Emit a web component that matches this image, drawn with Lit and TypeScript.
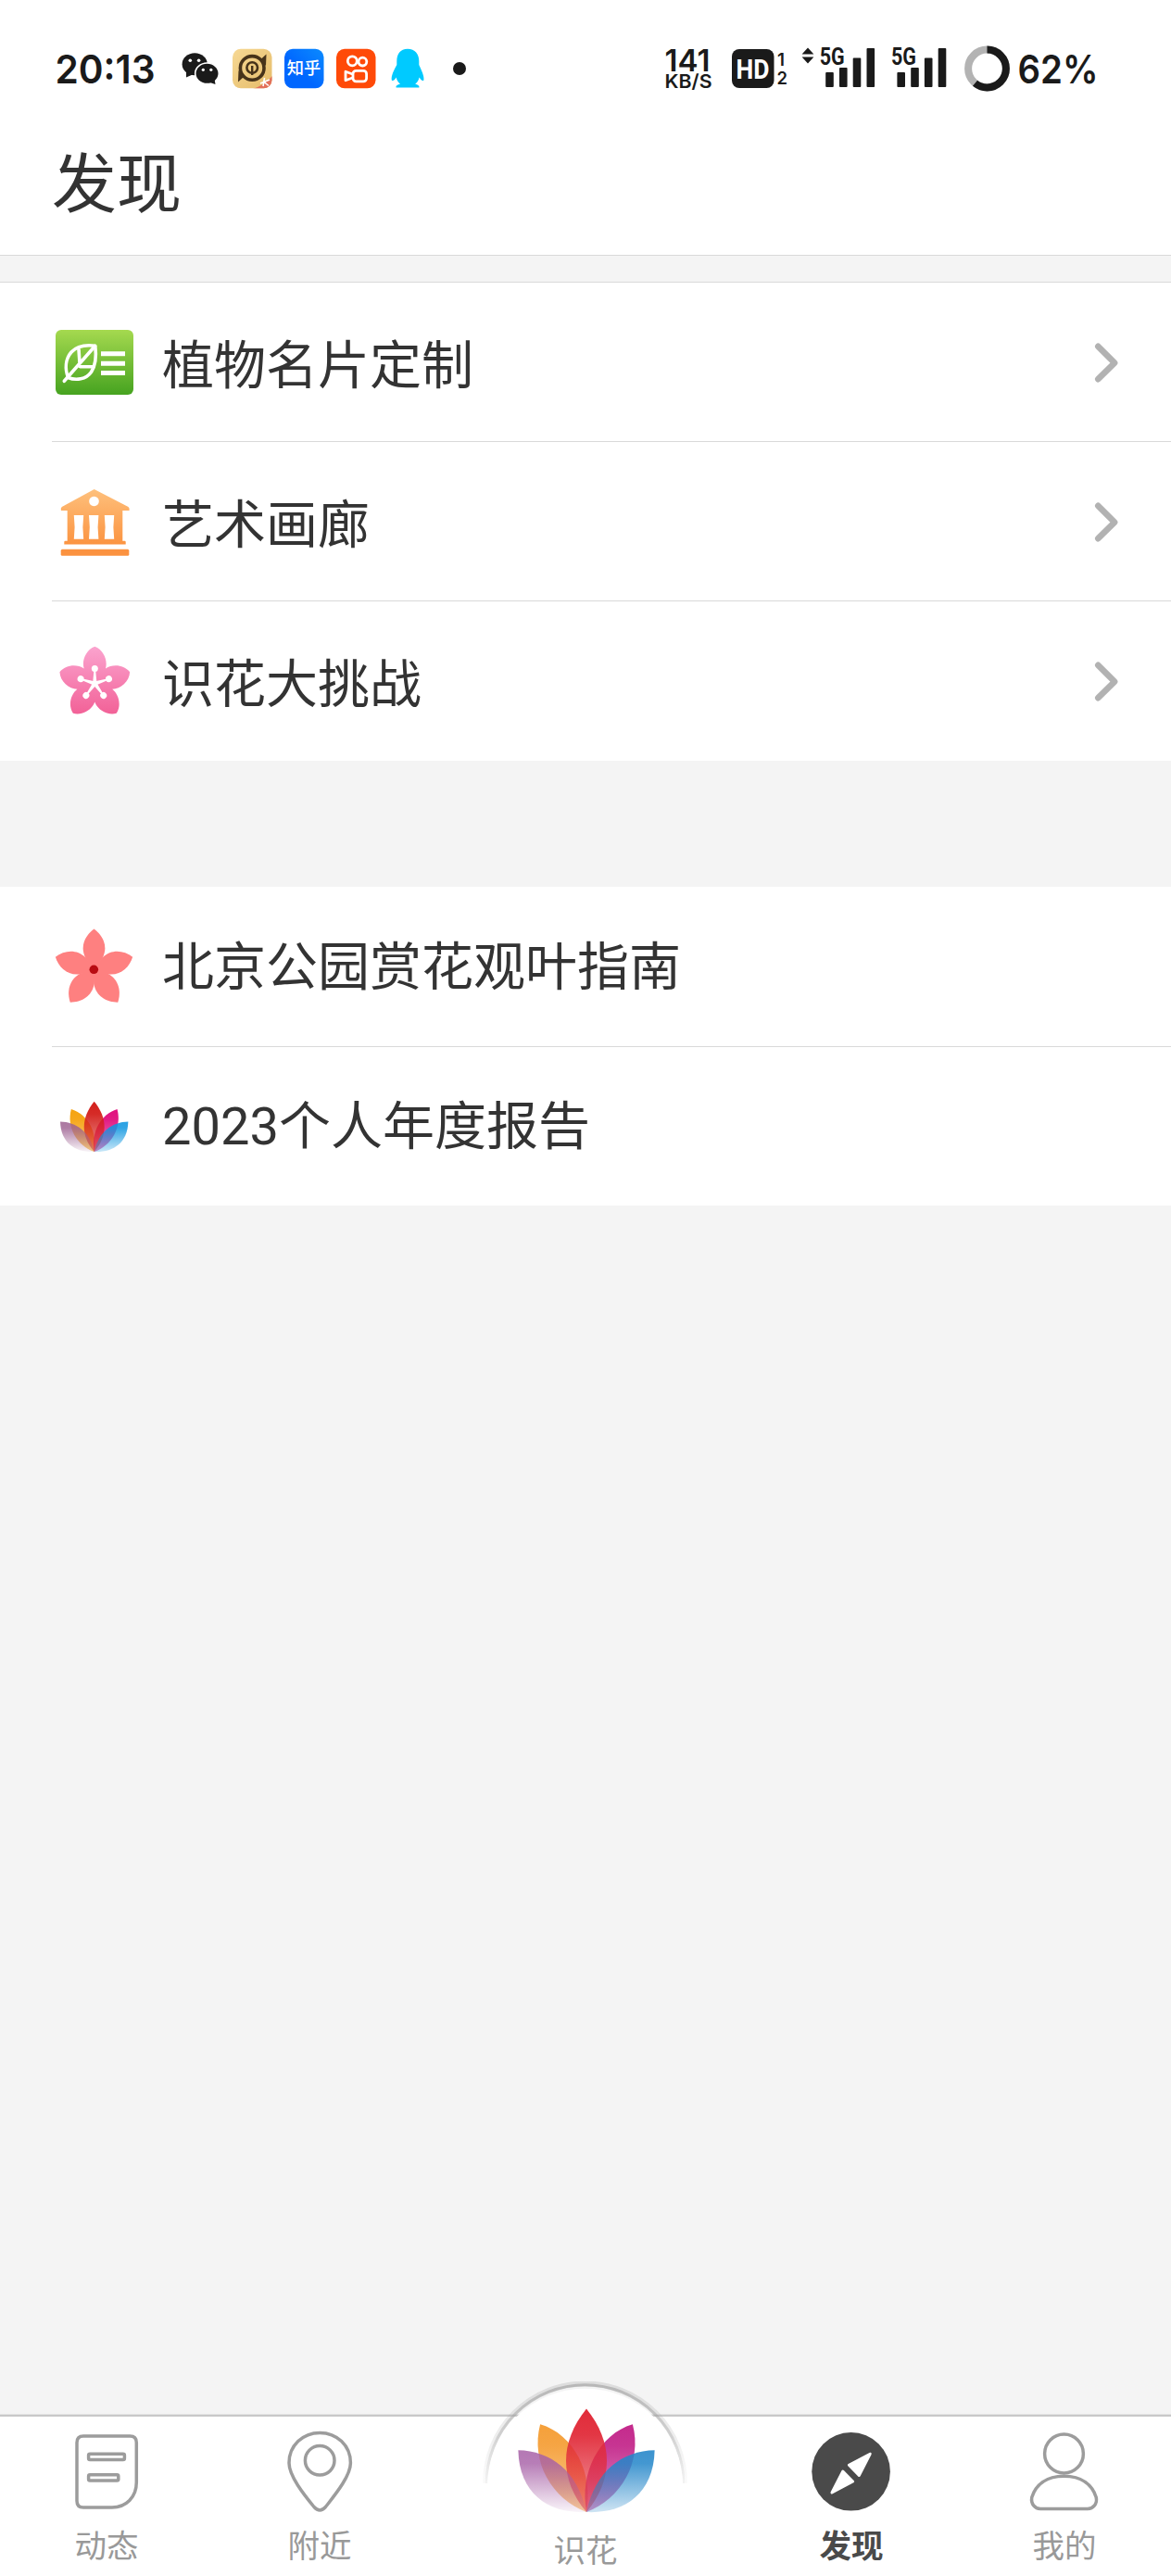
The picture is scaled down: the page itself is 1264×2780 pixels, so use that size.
import {LitElement, TemplateResult, css, html, svg} from 'lit';
import {customElement, property} from 'lit/decorators.js';
import {classMap} from 'lit/directives/class-map.js';

type Drawing = TemplateResult<2>;

interface ListItem {
  label: string;
  icon: Drawing;
  viewBox: string;
  arrow?: boolean;
}

interface Tab {
  label: string;
  icon: Drawing;
  viewBox: string;
  width: number;
  active?: boolean;
  center?: boolean;
}

// Five petals around the origin, one every 72 degrees.
const ANGLES = [0, 72, 144, 216, 288];

const lotus = (id: string, colors: string[], transform: string) => {
  const [purple, orange, red, magenta, blue] = colors;
  const fade = (name: string, color: string, top: number, end: number) => svg`
    <linearGradient id="${id}-${name}" gradientUnits="userSpaceOnUse" x1="0" y1=${top} x2="0" y2="0">
      <stop offset="0" stop-color=${color}></stop>
      <stop offset="0.25" stop-color=${color} stop-opacity="0.95"></stop>
      <stop offset="1" stop-color=${color} stop-opacity=${end}></stop>
    </linearGradient>`;
  const middle = 'M0 0 C-38 -14 -62 -54 -51 -94.7 C-14 -84 8 -42 0 0Z';
  const outer = 'M0 0 C-40 2 -74 -18 -75.3 -66.7 C-40 -66 -10 -45 0 0Z';
  return svg`
    <defs>
      ${fade('purple', purple, -70, 0.08)}
      ${fade('orange', orange, -95, 0.5)}
      ${fade('red', red, -111, 0.45)}
      ${fade('magenta', magenta, -95, 0.5)}
      ${fade('blue', blue, -70, 0.25)}
    </defs>
    <g transform=${transform}>
      <path d=${middle} fill="url(#${id}-orange)"></path>
      <path d=${middle} fill="url(#${id}-magenta)" transform="scale(-1 1)"></path>
      <path d="M0 0 C-30 -35 -30 -75 0 -111.5 C30 -75 30 -35 0 0Z" fill="url(#${id}-red)"></path>
      <path d=${outer} fill="url(#${id}-purple)" opacity="0.85"></path>
      <path d=${outer} fill="url(#${id}-blue)" opacity="0.9" transform="scale(-1 1)"></path>
    </g>`;
};

const cardIcon = svg`
  <defs>
    <linearGradient id="card" x1="0" y1="0" x2="0" y2="1">
      <stop offset="0" stop-color="#a5d94f"></stop>
      <stop offset="1" stop-color="#46a320"></stop>
    </linearGradient>
  </defs>
  <rect x="60" y="356" width="84" height="70" rx="6" fill="url(#card)"></rect>
  <g fill="none" stroke="#fff" stroke-width="3.6" stroke-linecap="round" stroke-linejoin="round">
    <path d="M102.8 373.2 C92 371.8 83 373.4 77 380 C70.5 387.5 70 398 73.5 407.5 C82 411 93 409.5 98.5 401.5 C104 393 104 383 102.8 373.2Z"></path>
    <path d="M69.3 411.3 L102.5 373.5 M85 377 L86 392 M86.5 395.8 H100.5"></path>
  </g>
  <path d="M109 381.7 H135 M109 392.2 H135 M109 402.6 H135" stroke="#fff" stroke-width="5"></path>`;

const galleryIcon = svg`
  <defs>
    <linearGradient id="gallery" gradientUnits="userSpaceOnUse" x1="0" y1="528" x2="0" y2="590">
      <stop offset="0" stop-color="#fec07c"></stop>
      <stop offset="1" stop-color="#fb923f"></stop>
    </linearGradient>
  </defs>
  <path
    fill="url(#gallery)"
    fill-rule="evenodd"
    d="M101.7 528 L138.5 547 Q140 548 139.6 551 H132.3 V583.7 H134.7 Q135.7 583.7 135.7 585 V587.5 H69.3 V585 Q69.3 583.7 70.3 583.7 H72.7 V551 H65.9 Q65.2 548 66.8 547Z
      M101.5 535.7 a5.3 5.3 0 1 0 0.01 0Z
      M79.8 556 H90.2 Q88.6 569 90.2 581.7 H79.8 Q81.4 569 79.8 556Z
      M96 556 H106.4 Q104.8 569 106.4 581.7 H96 Q97.6 569 96 556Z
      M112.8 556 H123.2 Q121.6 569 123.2 581.7 H112.8 Q114.4 569 112.8 556Z"
  ></path>
  <rect x="65.7" y="592.7" width="73.6" height="7" rx="1.5" fill="#fb9240"></rect>`;

const challengeIcon = svg`
  <defs>
    <linearGradient id="challenge" gradientUnits="userSpaceOnUse" x1="0" y1="698" x2="0" y2="771">
      <stop offset="0" stop-color="#fba3ce"></stop>
      <stop offset="1" stop-color="#f26197"></stop>
    </linearGradient>
    <clipPath id="petals">
      ${ANGLES.map(angle => svg`
        <path
          transform="translate(102.3 737.6) rotate(${angle})"
          d="M0 0 L-11.4 -15.2 C-14.5 -24 -10 -36 0 -39.8 C10 -36 14.5 -24 11.4 -15.2Z"
        ></path>`)}
    </clipPath>
  </defs>
  <rect x="60" y="690" width="84" height="90" fill="url(#challenge)" clip-path="url(#petals)"></rect>
  ${ANGLES.map(angle => svg`
    <g transform="translate(102.3 737.6) rotate(${angle})" fill="#fff">
      <path d="M-2.2 0 L-0.9 -14 H0.9 L2.2 0Z"></path>
      <circle cy="-16" r="3.5"></circle>
    </g>`)}`;

const blossomIcon = svg`
  ${ANGLES.map(angle => svg`
    <path
      transform="translate(101.5 1046.2) rotate(${angle})"
      fill="#fe8080"
      d="M0 2 L-9.3 -12.5 C-15.5 -25 -9.5 -37 0 -43.8 C9.5 -37 15.5 -25 9.3 -12.5Z"
    ></path>`)}
  <circle cx="101.3" cy="1046.3" r="4.8" fill="#b80c12"></circle>`;

const groups: ListItem[][] = [
  [
    {label: '植物名片定制', icon: cardIcon, viewBox: '56 305 92 171', arrow: true},
    {label: '艺术画廊', icon: galleryIcon, viewBox: '56 477 92 171', arrow: true},
    {label: '识花大挑战', icon: challengeIcon, viewBox: '56 649 92 171', arrow: true},
  ],
  [
    {label: '北京公园赏花观叶指南', icon: blossomIcon, viewBox: '56 958 92 171'},
    {
      label: '2023个人年度报告',
      icon: lotus(
        'report',
        ['#9c5f90', '#f5a310', '#d3201c', '#e0107e', '#0f96e0'],
        'translate(101.7 1243) scale(0.487)'
      ),
      viewBox: '56 1130 92 171',
    },
  ],
];

const tabs: Tab[] = [
  {
    label: '动态',
    width: 90,
    viewBox: '70 2610 90 113',
    icon: svg`
      <path d="M90 2629 H140.3 Q147.3 2629 147.3 2636 V2679 C147.3 2695 136 2706 121 2706 H90 Q83 2706 83 2699 V2636 Q83 2629 90 2629Z"></path>
      <rect x="95.6" y="2648.3" width="38.8" height="6.2" rx="1.5"></rect>
      <rect x="95.6" y="2670.8" width="32.2" height="6.2" rx="1.5"></rect>`,
  },
  {
    label: '附近',
    width: 90,
    viewBox: '300 2610 90 113',
    icon: svg`
      <path d="M312 2658 C312 2639 327 2625.4 345.2 2625.4 S378.4 2639 378.4 2658 C378.4 2672 362 2692 351.4 2705.5 Q345.2 2712.5 339 2705.5 C328 2692 312 2672 312 2658Z"></path>
      <circle cx="345.2" cy="2655.3" r="15.8"></circle>`,
  },
  {
    label: '识花',
    width: 230,
    viewBox: '517 2570 230 158',
    center: true,
    icon: svg`
      <defs>
        <linearGradient id="rim" gradientUnits="userSpaceOnUse" x1="0" y1="2575" x2="0" y2="2682">
          <stop offset="0" stop-color="#999"></stop>
          <stop offset="0.5" stop-color="#aaa" stop-opacity="0.8"></stop>
          <stop offset="1" stop-color="#ccc" stop-opacity="0.3"></stop>
        </linearGradient>
      </defs>
      <g fill="none" stroke="url(#rim)">
        <path d="M524 2680 A107.5 107.5 0 0 1 739 2680" stroke-width="6" opacity="0.25"></path>
        <path d="M525.2 2680 A106.3 106.3 0 0 1 737.8 2680" stroke-width="3" opacity="0.55"></path>
      </g>
      <path d="M526 2728 V2683.4 A105.6 105.6 0 0 1 737.2 2683.4 V2728Z" fill="#fff" stroke="none"></path>
      <g stroke="none">
        ${lotus(
          'home',
          ['#a65fa6', '#f5a03a', '#e12c3a', '#c42a8c', '#2486c9'],
          'translate(633 2711) scale(0.978 1)'
        )}
      </g>`,
  },
  {
    label: '发现',
    width: 90,
    viewBox: '874 2610 90 113',
    active: true,
    icon: svg`
      <circle cx="918.6" cy="2667.3" r="42.3" fill="#4a4a4a" stroke="none"></circle>
      <g fill="#fff" stroke="#fff" stroke-width="3" stroke-linejoin="round">
        <path d="M939.2 2648.2 L916.4 2660.3 L927.3 2671.5Z"></path>
        <path d="M898 2690 L909.8 2667 L920.6 2678Z"></path>
      </g>`,
  },
  {
    label: '我的',
    width: 90,
    viewBox: '1104 2610 90 113',
    icon: svg`
      <circle cx="1148.5" cy="2648" r="20.9"></circle>
      <path d="M1148.5 2672.3 C1168 2672.3 1179 2682 1183.2 2695 C1184.8 2702 1180 2707.4 1174 2707.4 H1123 C1117 2707.4 1112.4 2702 1113.8 2695 C1118 2682 1129 2672.3 1148.5 2672.3Z"></path>`,
  },
];

@customElement('status-bar')
export class StatusBar extends LitElement {
  static get styles() {
    return css`
      :host {
        align-items: center;
        display: flex;
        height: 148px;
        justify-content: space-between;
        padding: 0 64px 0 56px;
      }
      .side {
        display: flex;
      }
      svg {
        display: block;
        fill: #1a1a1a;
        font-family: Inter, 'Liberation Sans', sans-serif;
        font-weight: 600;
      }
      .narrow {
        font-family: Roboto, 'Liberation Sans', sans-serif;
        font-weight: 700;
      }
      .cjk {
        font-family: 'Noto Sans CJK SC', sans-serif;
        font-weight: 500;
      }
    `;
  }

  // Every glyph shares the same vertical band, only x and width differ.
  glyph(x: number, width: number, content: Drawing) {
    return html`
      <svg width=${width} height="56" viewBox="${x} 46 ${width} 56">${content}</svg>
    `;
  }

  signal(x: number) {
    return svg`
      <text class="narrow" x=${x - 6.5} y="70" font-size="26" textLength="27" lengthAdjust="spacingAndGlyphs">5G</text>
      <rect x=${x} y="78" width="8.6" height="16" rx="1"></rect>
      <rect x=${x + 14.8} y="73" width="8.6" height="21" rx="1"></rect>
      <rect x=${x + 29.5} y="62.5" width="8.6" height="31.5" rx="1"></rect>
      <rect x=${x + 44.3} y="52" width="8.6" height="42" rx="1"></rect>`;
  }

  render() {
    return html`
      <div class="side">
        ${this.glyph(56, 130, svg`
          <text x="59.5" y="89.8" font-size="43" textLength="108" lengthAdjust="spacingAndGlyphs">20:13</text>`)}
        ${this.glyph(186, 60, svg`
          <ellipse cx="210.2" cy="69.3" rx="13.6" ry="12"></ellipse>
          <path d="M201 77 L201 83.5 L209 80Z"></path>
          <ellipse cx="223.5" cy="79.3" rx="12.8" ry="11.3" stroke="#fff" stroke-width="1.6"></ellipse>
          <path d="M225 88.5 L232.5 91 L231.5 85Z"></path>
          <g fill="#fff">
            <circle cx="205.3" cy="65.3" r="1.8"></circle>
            <circle cx="214.6" cy="65.3" r="1.8"></circle>
            <circle cx="219.3" cy="75.3" r="1.6"></circle>
            <circle cx="227.8" cy="75.3" r="1.6"></circle>
          </g>`)}
        ${this.glyph(246, 54, svg`
          <defs>
            <linearGradient id="gold" x1="0" y1="0" x2="1" y2="1">
              <stop offset="0" stop-color="#f7d995"></stop>
              <stop offset="1" stop-color="#e5bb68"></stop>
            </linearGradient>
            <clipPath id="tile"><rect x="251" y="52.8" width="42.5" height="42.5" rx="9"></rect></clipPath>
          </defs>
          <g clip-path="url(#tile)">
            <rect x="251" y="52" width="43" height="44" fill="url(#gold)"></rect>
            <path d="M273 96 Q285 92 294 82 V96Z" fill="#e2705a"></path>
            <path d="M281 90 L291 86 M285.5 84 L284 93 M285 88.5 L290 92.5" stroke="#fff" stroke-width="1.6"></path>
          </g>
          <g fill="none" stroke="#47331a">
            <circle cx="272.2" cy="73.4" r="12.8" stroke-width="3.6"></circle>
            <circle cx="272.2" cy="73" r="5.8" stroke-width="2.6"></circle>
            <path d="M272.2 71 V81" stroke-width="2.4"></path>
          </g>
          <path d="M257 88.5 L257.5 76 L263 83Z M287.5 58.5 L287 71 L281.5 64Z" fill="#47331a"></path>`)}
        ${this.glyph(300, 56, svg`
          <defs>
            <linearGradient id="azure" x1="1" y1="0" x2="0" y2="1">
              <stop offset="0" stop-color="#0b8bff"></stop>
              <stop offset="0.6" stop-color="#0066ff"></stop>
            </linearGradient>
          </defs>
          <rect x="307" y="52.8" width="42.5" height="42.5" rx="9" fill="url(#azure)"></rect>
          <text class="cjk" x="309.8" y="80.3" font-size="18.3" fill="#fff">知乎</text>`)}
        ${this.glyph(356, 56, svg`
          <rect x="363" y="52.8" width="42.5" height="42.5" rx="9" fill="#ff4a08"></rect>
          <g fill="none" stroke="#fff" stroke-width="2.8" stroke-linejoin="round">
            <circle cx="380.3" cy="65.8" r="5"></circle>
            <circle cx="391.4" cy="66.6" r="4.4"></circle>
            <rect x="381" y="76.3" width="14.6" height="11.6" rx="3.4"></rect>
            <path d="M380.5 80 L373 77.2 V86.8 L380.5 84"></path>
          </g>`)}
        ${this.glyph(412, 56, svg`
          <path
            fill="#00caff"
            d="M440 52.8 C432 52.8 428.3 58.5 428.3 66 V70 C425 76 422 82 422.8 86.5 C424 88 426.5 86 427.6 83.5 C428.5 87 430.5 89.5 432 90.8 C429 91.5 427 92.5 427.6 94.6 H452.4 C453 92.5 451 91.5 448.2 90.8 C450 89.5 451.7 87 452.6 83.5 C454 86 456.2 88 457.4 86.5 C458 82 455 76 452.3 70 V66 C452.3 58.5 448 52.8 440 52.8Z"
          ></path>`)}
        ${this.glyph(468, 40, svg`<circle cx="496" cy="74" r="7"></circle>`)}
      </div>
      <div class="side">
        ${this.glyph(716, 66, svg`
          <text x="717.5" y="77" font-size="32" textLength="49" lengthAdjust="spacingAndGlyphs">141</text>
          <text x="717.5" y="95" font-size="20.5" textLength="51" lengthAdjust="spacingAndGlyphs">KB/S</text>`)}
        ${this.glyph(782, 76, svg`
          <rect x="790" y="53" width="45.5" height="42" rx="8"></rect>
          <text class="narrow" x="794.5" y="84.7" font-size="29" fill="#fff" textLength="36" lengthAdjust="spacingAndGlyphs">HD</text>
          <text x="839" y="71" font-size="19">1</text>
          <text x="838.4" y="91" font-size="19" textLength="11.5" lengthAdjust="spacingAndGlyphs">2</text>`)}
        ${this.glyph(858, 94, svg`
          <path d="M865.6 58.6 L872 51.6 L878.4 58.6Z M865.6 61.4 L872 68.4 L878.4 61.4Z"></path>
          ${this.signal(891.2)}`)}
        ${this.glyph(952, 84, this.signal(968.4))}
        ${this.glyph(1036, 58, svg`
          <g fill="none" stroke-width="8">
            <circle cx="1065.5" cy="74" r="20.4" stroke="#b3b3b3"></circle>
            <circle
              cx="1065.5"
              cy="74"
              r="20.4"
              stroke="#1a1a1a"
              pathLength="100"
              stroke-dasharray="61 100"
              transform="rotate(-90 1065.5 74)"
            ></circle>
          </g>`)}
        ${this.glyph(1094, 106, svg`
          <text x="1098.5" y="89.8" font-size="43" textLength="87" lengthAdjust="spacingAndGlyphs">62%</text>`)}
      </div>
    `;
  }
}

@customElement('list-row')
export class ListRow extends LitElement {
  @property({attribute: false})
  item!: ListItem;

  static get styles() {
    return css`
      :host {
        display: block;
        padding-left: 56px;
      }
      .row {
        align-items: center;
        display: flex;
        height: 171px;
        padding-right: 54px;
      }
      .label {
        color: #333;
        flex: 1;
        font-size: 56px;
        line-height: 80px;
        margin-left: 27px;
      }
      .label--arrow {
        padding-top: 8px;
      }
      .chevron {
        fill: none;
        stroke: #b2b2b2;
        stroke-linecap: round;
        stroke-linejoin: round;
        stroke-width: 6.6;
      }
      svg {
        display: block;
      }
    `;
  }

  render() {
    return html`
      <div class="row">
        <svg width="92" height="171" viewBox=${this.item.viewBox}>${this.item.icon}</svg>
        <div class=${classMap({label: true, 'label--arrow': !!this.item.arrow})}>${this.item.label}</div>
        ${this.item.arrow
          ? html`
            <svg class="chevron" width="32" height="50" viewBox="0 0 32 50">
              <path d="M7.3 7.8 L25.1 25.6 L7.3 43.2"></path>
            </svg>
            `
          : ''}
      </div>
    `;
  }
}

@customElement('tab-bar')
export class TabBar extends LitElement {
  static get styles() {
    return css`
      :host {
        background: #fff;
        border-top: 2px solid #c8c8c8;
        box-shadow: 0 -1px 0 #e4e4e4;
        box-sizing: border-box;
        display: grid;
        flex: none;
        grid-template-columns: 230px 230px 344px 230px 230px;
        grid-template-rows: 172px;
        height: 174px;
      }
      .tab {
        align-items: center;
        color: #999;
        display: flex;
        flex-direction: column;
        font-size: 34.5px;
        justify-content: flex-end;
        line-height: 50px;
        min-height: 0;
        padding-bottom: 7px;
      }
      /* The round lotus button is taller than the bar and rises above it. */
      .tab--center {
        padding-bottom: 2px;
      }
      .tab--active {
        color: #4a4a4a;
        font-weight: 700;
      }
      svg {
        display: block;
        fill: none;
        flex: none;
        stroke: #9c9c9c;
        stroke-width: 3.5;
      }
    `;
  }

  render() {
    return html`
      ${tabs.map(tab => {
        const height = tab.viewBox.split(' ')[3];
        return html`
          <div class=${classMap({
            tab: true,
            'tab--center': !!tab.center,
            'tab--active': !!tab.active,
          })}>
            <svg width=${tab.width} height=${height} viewBox=${tab.viewBox}>${tab.icon}</svg>
            <div>${tab.label}</div>
          </div>
        `;
      })}
    `;
  }
}

@customElement('app-root')
export class AppRoot extends LitElement {
  static get styles() {
    return css`
      :host {
        background: #f4f4f4;
        display: flex;
        flex-direction: column;
        font-family: Roboto, 'Noto Sans CJK SC', sans-serif;
        height: 2780px;
        overflow: hidden;
        width: 1264px;
      }
      .header {
        background: #fff;
        border-bottom: 1px solid #d9d9d9;
      }
      h1 {
        color: #333;
        font-size: 70px;
        font-weight: 400;
        height: 127px;
        line-height: 104px;
        margin: 0;
        padding-left: 56px;
        box-sizing: border-box;
      }
      .group {
        background: #fff;
        margin-bottom: 136px;
      }
      .group:first-child {
        border-top: 1px solid #d9d9d9;
        margin-top: 28px;
        padding-bottom: 1px;
      }
      .group:last-child {
        padding-top: 1px;
      }
      .line {
        background: #d9d9d9;
        height: 1px;
        margin-left: 56px;
      }
      main {
        flex: 1;
      }
    `;
  }

  render() {
    return html`
      <div class="header">
        <status-bar></status-bar>
        <h1>发现</h1>
      </div>
      <main>
        ${groups.map(group => html`
          <div class="group">
            ${group.map((item, index) => html`
              ${index ? html`<div class="line"></div>` : ''}
              <list-row .item=${item}></list-row>
            `)}
          </div>
        `)}
      </main>
      <tab-bar></tab-bar>
    `;
  }
}
